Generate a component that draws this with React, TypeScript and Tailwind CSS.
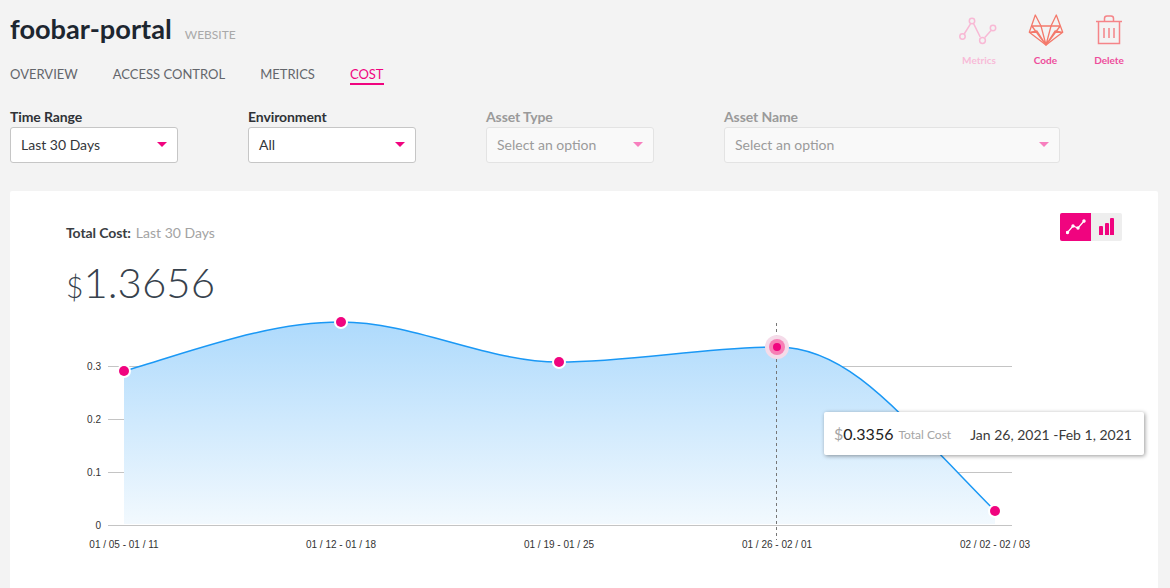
import React from "react";

const font = { fontFamily: "Lato, sans-serif" };

interface SelectProps {
  label: string;
  value: string;
  width: string;
  disabled?: boolean;
}

const Select: React.FC<SelectProps> = ({ label, value, width, disabled }) => {
  return (
    <div className={`${width} shrink-0`}>
      <p
        className={`text-[14px] leading-[20px] font-bold tracking-[-0.1px] ${
          disabled ? "text-[#9a9a9a]" : "text-[#2f3237]"
        }`}
      >
        {label}
      </p>
      <div
        className={`flex h-[36px] items-center justify-between rounded-[3px] border pb-[1px] pl-[10px] pr-[10px] text-[14px] ${
          disabled
            ? "border-[#e3e3e3] bg-[#f9f9f9] text-[#9b9b9b]"
            : "border-[#c6c6c6] bg-white text-[#33363a]"
        }`}
      >
        <span>{value}</span>
        <span
          className={`h-0 w-0 border-x-[5px] border-t-[5px] border-x-transparent ${
            disabled ? "border-t-[#f77fbe]" : "border-t-[#f0047f]"
          }`}
        />
      </div>
    </div>
  );
};

const MetricsIcon = () => (
  <svg width="40" height="32" viewBox="0 0 40 32" fill="none" stroke="#f8b9d5" strokeWidth="1.5">
    <path d="M5.2 20 L11.5 9.8 M14.6 9.6 L21.2 23 M25.8 23.5 L32.5 16" />
    <circle cx="3.5" cy="22.5" r="2.7" />
    <circle cx="13" cy="7" r="2.7" />
    <circle cx="23.5" cy="26.5" r="2.9" />
    <circle cx="34" cy="14" r="2.7" />
  </svg>
);

const GitlabIcon = () => (
  <svg width="36" height="32" viewBox="0 0 36 32" fill="none" stroke="#f4796b" strokeWidth="1.3" strokeLinejoin="round">
    <path d="M18 31 L1.3 18.3 L7.3 1 L13 12 H23 L28.3 1 L34.7 18.3 Z" />
    <path d="M3.8 12 H13 L18 31 L23 12 H32.2 M3.8 12 L18 31 L32.2 12 M1.3 18.3 L9 17 L18 31 L27 17 L34.7 18.3" />
  </svg>
);

const TrashIcon = () => (
  <svg width="28" height="32" viewBox="0 0 28 32" fill="none" stroke="#f58488" strokeWidth="1.5">
    <path d="M1 7.5 H27" />
    <path d="M3.5 7.5 V29.5 H24.5 V7.5" />
    <path d="M9.5 7 V4.5 Q9.5 2 12 2 H16 Q18.5 2 18.5 4.5 V7" />
    <path d="M9 14 V24 M14 14 V24 M19 14 V24" />
  </svg>
);

const ActionIcon: React.FC<{ label: string; width: string; faded?: boolean; children: React.ReactNode }> = ({
  label,
  width,
  faded,
  children,
}) => (
  <div className={`flex ${width} flex-col items-center`}>
    <div className="flex h-[36px] items-center justify-center">{children}</div>
    <span
      className={`mt-[6px] text-[10px] leading-[12px] font-bold ${
        faded ? "text-[#f8bbd8]" : "text-[#ee4d9b]"
      }`}
    >
      {label}
    </span>
  </div>
);

const tabs = ["OVERVIEW", "ACCESS CONTROL", "METRICS", "COST"];

const points = [
  { x: 124, y: 371 },
  { x: 341, y: 322 },
  { x: 559, y: 362 },
  { x: 995, y: 511 },
];

const linePath =
  "M124,371 C196,350 268,322 341,322 C414,322 486,362 559,362 C632,362 705,347 777,347 C850,347 900,415 995,511";

const Chart = () => (
  <svg width="1000" height="260" viewBox="66 310 1000 260" className="block">
    <defs>
      <linearGradient id="area" x1="0" y1="0" x2="0" y2="1">
        <stop offset="0" stopColor="#aedafc" />
        <stop offset="1" stopColor="#f2f9fe" />
      </linearGradient>
    </defs>
    {[366, 419, 472, 525].map((y) => (
      <line key={y} x1="108" x2="1012" y1={y + 0.5} y2={y + 0.5} stroke="#c4c4c4" strokeWidth="1" />
    ))}
    <path d={`${linePath} L995,524 L124,524 Z`} fill="url(#area)" />
    <path d={linePath} fill="none" stroke="#1a98f5" strokeWidth="1.5" />
    <line x1="776.5" x2="776.5" y1="323" y2="540" stroke="#777" strokeWidth="1" strokeDasharray="3 3" />
    {[
      { y: 366, t: "0.3", x: 101 },
      { y: 419, t: "0.2", x: 101 },
      { y: 472, t: "0.1", x: 101 },
      { y: 525, t: "0", x: 101 },
    ].map((l) => (
      <text key={l.t} x={l.x} y={l.y + 3.5} textAnchor="end" fontSize="10" fill="#333" fontFamily="Liberation Sans, sans-serif">
        {l.t}
      </text>
    ))}
    {[
      { x: 124, t: "01 / 05 - 01 / 11" },
      { x: 341, t: "01 / 12 - 01 / 18" },
      { x: 559, t: "01 / 19 - 01 / 25" },
      { x: 777, t: "01 / 26 - 02 / 01" },
      { x: 995, t: "02 / 02 - 02 / 03" },
    ].map((l) => (
      <text key={l.t} x={l.x} y={548} textAnchor="middle" fontSize="10" fill="#333" fontFamily="Liberation Sans, sans-serif">
        {l.t}
      </text>
    ))}
    {points.map((p) => (
      <g key={p.x}>
        <circle cx={p.x} cy={p.y} r="7" fill="#fff" />
        <circle cx={p.x} cy={p.y} r="5" fill="#f0047f" />
      </g>
    ))}
    <circle cx="777" cy="347" r="12" fill="#f5dbe9" />
    <circle cx="777" cy="347" r="8" fill="#f77fb5" />
    <circle cx="777" cy="347" r="4" fill="#f0047f" />
  </svg>
);

const App: React.FC = () => {
  return (
    <div className="h-[588px] w-[1170px] overflow-hidden bg-[#f3f3f3]" style={font}>
      <div className="flex h-[104px] justify-between pl-[10px] pr-[31px]">
        <div>
          <div className="flex h-[60px] items-baseline pt-[10px]">
            <h1 className="text-[27.2px] leading-[38px] font-bold text-[#1d2630]">foobar-portal</h1>
            <span className="ml-[13px] text-[12px] text-[#a9a9a9]">WEBSITE</span>
          </div>
          <div className="flex gap-[35px]">
            {tabs.map((t) => (
              <span
                key={t}
                className={`h-[25px] border-b-2 text-[13px] leading-[28px] ${
                  t === "COST" ? "border-[#f0047f] text-[#f0047f]" : "border-transparent text-[#63666b]"
                }`}
              >
                {t}
              </span>
            ))}
          </div>
        </div>
        <div className="flex pt-[12px]">
          <ActionIcon label="Metrics" width="w-[66px]" faded>
            <MetricsIcon />
          </ActionIcon>
          <ActionIcon label="Code" width="w-[67px]">
            <GitlabIcon />
          </ActionIcon>
          <ActionIcon label="Delete" width="w-[60px]">
            <TrashIcon />
          </ActionIcon>
        </div>
      </div>

      <div className="flex gap-[70px] pl-[10px] pt-[3px]">
        <Select label="Time Range" value="Last 30 Days" width="w-[168px]" />
        <Select label="Environment" value="All" width="w-[168px]" />
        <Select label="Asset Type" value="Select an option" width="w-[168px]" disabled />
        <Select label="Asset Name" value="Select an option" width="w-[336px]" disabled />
      </div>

      <div className="relative mx-[12px] ml-[10px] mt-[28px] h-[420px] rounded-[2px] bg-white pl-[56px] pt-[32px]">
        <div className="flex items-start justify-between pr-[36px]">
          <p className="text-[14px] leading-[20px]">
            <span className="font-bold tracking-[-0.1px] text-[#3a3d42]">Total Cost:</span>
            <span className="ml-[5px] text-[#a3a3a3]">Last 30 Days</span>
          </p>
          <div className="mt-[-10px] flex h-[28px] w-[62px] overflow-hidden rounded-[2px] bg-[#eeeeee]">
            <div className="flex w-[31px] items-center justify-center bg-[#f0047f]">
              <svg width="20" height="16" viewBox="0 0 20 16" fill="none" stroke="#fff" strokeWidth="1.2">
                <path d="M1 14 L7 7 L12 9 L18 2" />
                <circle cx="1.5" cy="13.5" r="1.1" fill="#fff" />
                <circle cx="7" cy="7" r="1.1" fill="#fff" />
                <circle cx="12" cy="9" r="1.1" fill="#fff" />
                <circle cx="18" cy="2" r="1.1" fill="#fff" />
              </svg>
            </div>
            <div className="flex w-[31px] items-end justify-center gap-[1.5px] pb-[6px]">
              <span className="h-[9px] w-[4px] rounded-t-[1px] bg-[#f0047f]" />
              <span className="h-[12px] w-[4px] rounded-t-[1px] bg-[#f0047f]" />
              <span className="h-[17px] w-[4px] rounded-t-[1px] bg-[#f0047f]" />
            </div>
          </div>
        </div>
        <p className="mt-[15px] flex h-[48px] items-baseline text-[42px] leading-[48px] font-light text-[#37424d]">
          <span className="text-[30px]">$</span>
          <span>1.3656</span>
        </p>
        <div className="mt-[4px]">
          <Chart />
        </div>

        <div className="absolute left-[814px] top-[221px] flex h-[43px] w-[320px] items-center whitespace-nowrap rounded-[2px] bg-white pl-[10px] pt-[1px] shadow-[1px_1px_4px_rgba(0,0,0,0.4)]">
          <span className="text-[16px] text-[#a5a5a5]">$</span>
          <span className="text-[16px] text-[#222]">0.3356</span>
          <span className="ml-[5px] mt-[2px] text-[12px] text-[#a5a5a5]">Total Cost</span>
          <span className="ml-[19px] text-[14px] text-[#3a3a3a]">Jan 26, 2021 -Feb 1, 2021</span>
        </div>
      </div>
    </div>
  );
};

export default App;
